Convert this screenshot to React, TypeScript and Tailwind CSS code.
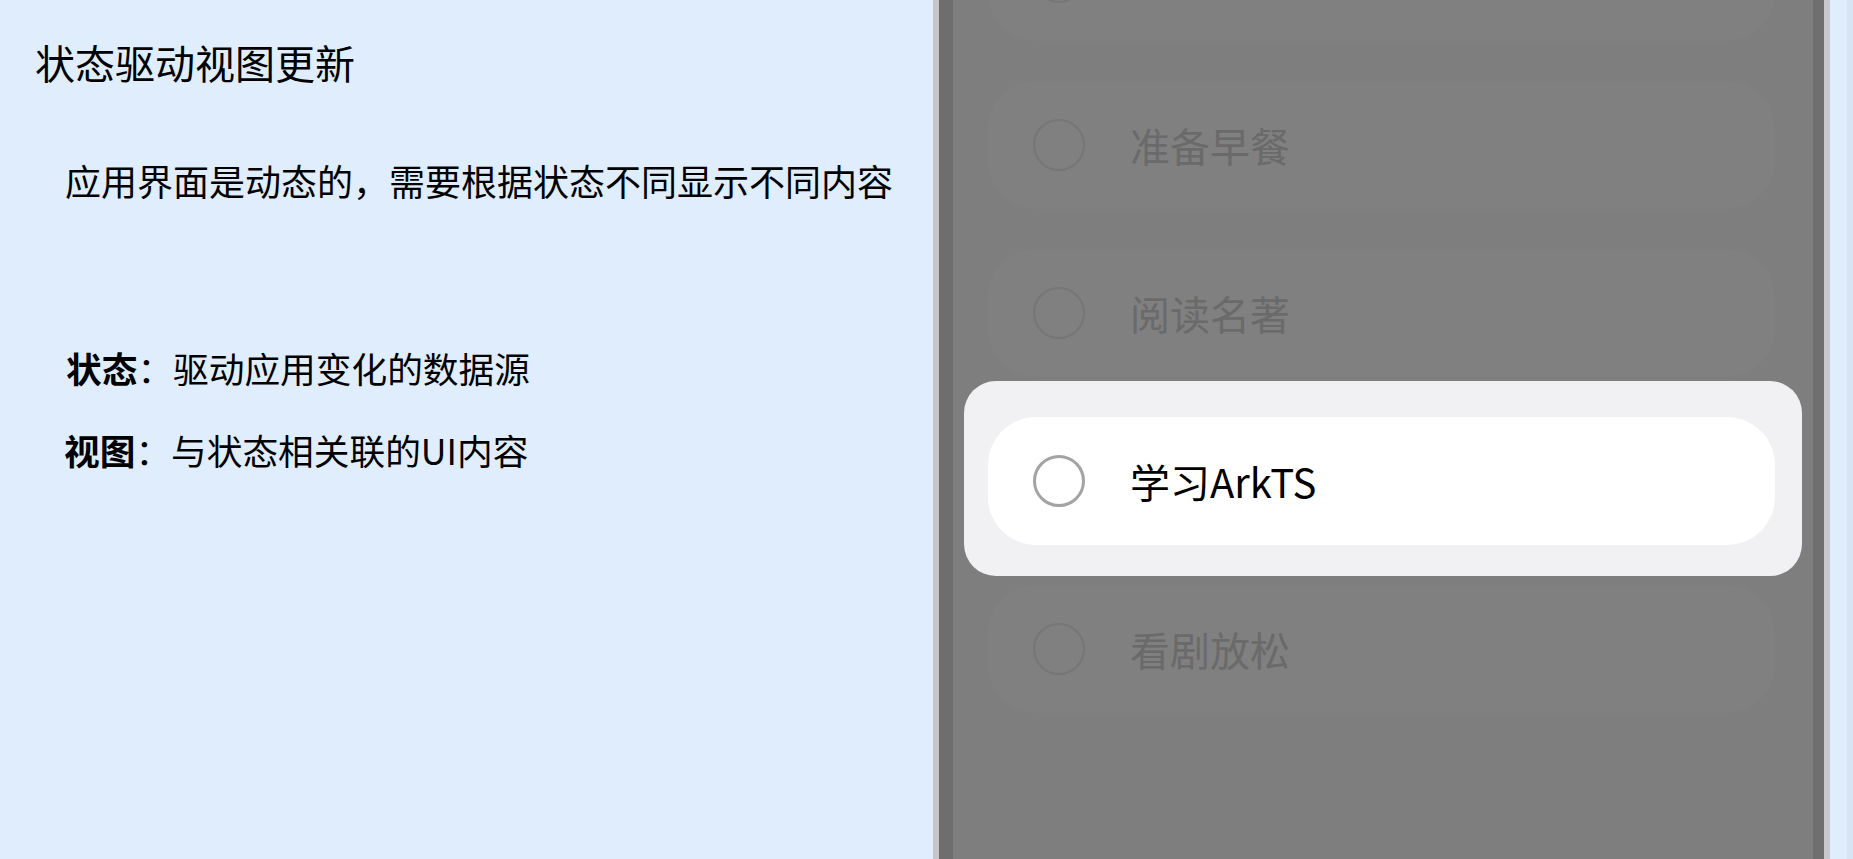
import React from "react";

const font = { fontFamily: '"Noto Sans CJK SC", "Noto Sans", sans-serif' };

const todos = ["", "准备早餐", "阅读名著", "学习ArkTS", "看剧放松"];
const lifted = 3;

const TodoRow: React.FC<{ text: string; hidden?: boolean }> = ({ text, hidden }) => (
  <div
    className={
      "flex h-[128px] shrink-0 items-center rounded-[48px] bg-[#808080] pl-[45px] " +
      (hidden ? "invisible" : "")
    }
  >
    <div className="h-[52px] w-[52px] shrink-0 rounded-full border-2 border-[#767676]" />
    {text && (
      <span className="ml-[45px] text-[40px] font-normal leading-[48px] text-[#6a6a6a]">
        {text}
      </span>
    )}
  </div>
);

export default function App() {
  return (
    <div
      className="flex h-[859px] w-[1853px] overflow-hidden bg-[#e0edfd] text-black"
      style={font}
    >
      {/* left: notes */}
      <div className="flex w-[933px] shrink-0 flex-col pt-[38px]">
        <h1 className="pl-[35px] text-[40px] font-normal leading-[48px]">
          状态驱动视图更新
        </h1>
        <p className="mt-[72px] pl-[65px] text-[36px] leading-[44px]">
          应用界面是动态的，需要根据状态不同显示不同内容
        </p>
        <p className="mt-[144px] pl-[66px] text-[35.7px] leading-[44px]">
          <span className="font-bold">状态</span>：驱动应用变化的数据源
        </p>
        <p className="mt-[38px] pl-[64px] text-[35.7px] leading-[44px]">
          <span className="font-bold">视图</span>：与状态相关联的UI内容
        </p>
      </div>

      {/* right: phone preview */}
      <div className="flex h-full">
        <div className="w-[6px] bg-[#c6c6ca]" />
        <div className="w-[14px] bg-[#6e6e6e]" />
        <div className="relative h-full w-[860px] overflow-hidden bg-[#7e7e7e]">
          <div className="mt-[-87px] flex flex-col gap-[40px] pl-[35px] pr-[38px]">
            {todos.map((t, i) => (
              <TodoRow key={i} text={t} hidden={i === lifted} />
            ))}
          </div>

          {/* dragged item */}
          <div className="absolute left-[11px] top-[381px] h-[195px] w-[838px] rounded-[32px] bg-[#f1f1f3] pl-[24px] pr-[27px] pt-[36px]">
            <div className="flex h-[128px] items-center rounded-[48px] bg-white pl-[45px]">
              <div className="h-[52px] w-[52px] shrink-0 rounded-full border-[3px] border-[#a3a3a3]" />
              <span className="ml-[45px] text-[40px] font-normal leading-[48px] text-black">
                {todos[lifted]}
              </span>
            </div>
          </div>
        </div>
        <div className="w-[11px] bg-[#6f6f6f]" />
        <div className="w-[6px] bg-[#c8c8cc]" />
        <div className="w-[17px] bg-[#e0edfd]" />
        <div className="w-[6px] bg-[#d6e4f4]" />
      </div>
    </div>
  );
}
